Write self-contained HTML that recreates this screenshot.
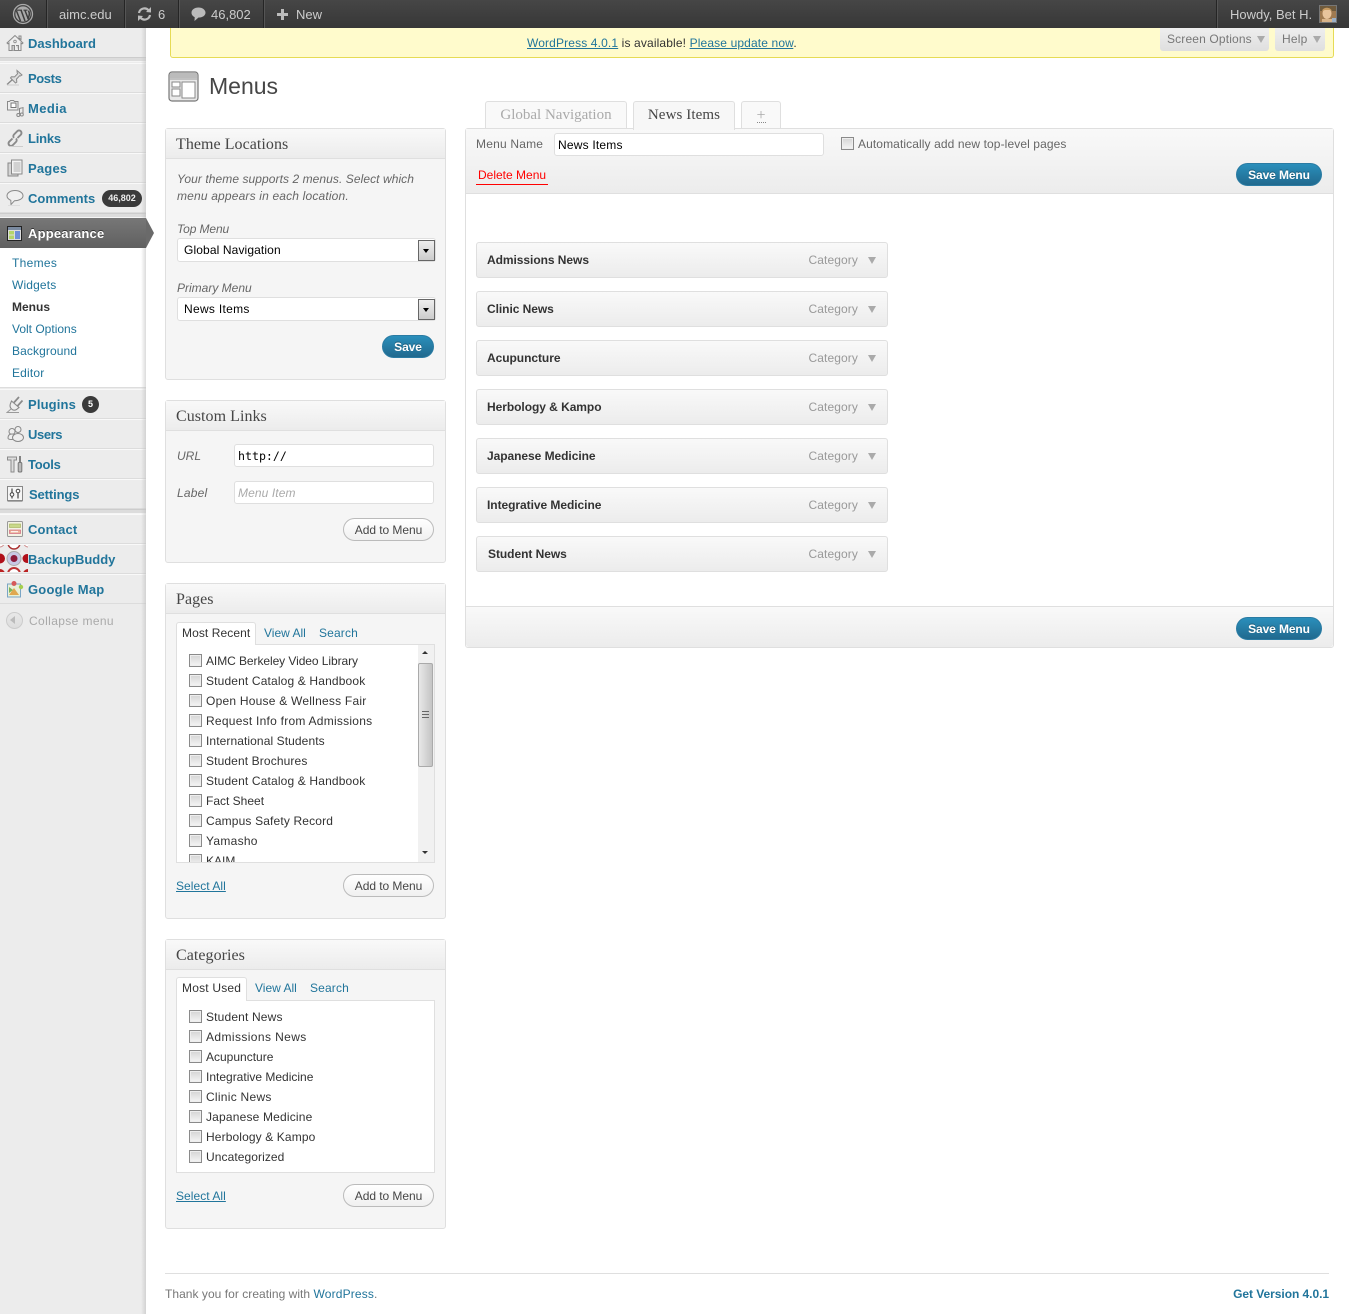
<!DOCTYPE html>
<html><head><meta charset="utf-8"><title>Menus</title>
<style>
*{box-sizing:border-box}
html,body{margin:0;padding:0}
body{width:1349px;height:1314px;position:relative;overflow:hidden;background:#fff;font:12px/16px "Liberation Sans",Arial,sans-serif;color:#333}
.a,.t{position:absolute}
.t{white-space:nowrap}
a{color:#21759b;text-decoration:none}
#bar{left:0;top:0;width:1349px;height:28px;background:linear-gradient(#464646,#373737)}
#bar .s{position:absolute;top:0;width:1px;height:28px;background:#252525;box-shadow:1px 0 0 #555}
#bar .t{color:#ccc;font-size:13px;top:7px}
#side{left:0;top:28px;width:146px;height:1286px;background:#ececec}
.m{position:absolute;left:0;width:146px;height:30px;border-top:1px solid #f9f9f9;border-bottom:1px solid #dcdcdc}
.ml{position:absolute;left:28px;font-weight:bold;font-size:13px;color:#21759b;white-space:nowrap;line-height:16px;z-index:3}
.mi{position:absolute;left:6px;width:18px;height:18px;z-index:3}
.sep{position:absolute;left:0;width:146px;height:5px;background:#dcdcdc;border-top:1px solid #ccc;border-bottom:1px solid #f5f5f5}
.sub{position:absolute;left:12px;font-size:12px;color:#21759b;white-space:nowrap}
.box{position:absolute;left:165px;width:281px;background:#f5f5f5;border:1px solid #dfdfdf;border-radius:3px}
.box h3{margin:0;height:30px;background:linear-gradient(#f9f9f9,#ececec);border-bottom:1px solid #dfdfdf;font:normal 16px/31px "Liberation Serif",Georgia,serif;color:#464646;padding-left:10px;letter-spacing:.05px;overflow:hidden}
.i{font-style:italic;color:#666}
.inp{position:absolute;background:#fff;border:1px solid #dfdfdf;border-radius:3px;white-space:nowrap}
.btn{position:absolute;height:23px;border:1px solid #bbb;border-radius:12px;background:linear-gradient(#fff,#f0f0f0);color:#464646;text-align:center;font-size:12px;line-height:22px;letter-spacing:-.05px}
.pri{position:absolute;height:23px;border-radius:12px;background:linear-gradient(#2a8fbb,#21698e);border:1px solid #2a7ba3;color:#fff;font-weight:bold;font-size:12px;line-height:22px;text-align:center;text-shadow:0 -1px 0 rgba(0,0,0,.3);letter-spacing:-.1px}
.cb{position:absolute;width:13px;height:13px;border:1px solid #8a8a8a;background:linear-gradient(#d5d5d5,#f5f5f5);box-shadow:inset 0 0 0 1px #eee}
.it{position:absolute;left:476px;width:412px;height:36px;background:linear-gradient(#f9f9f9,#ececec);border:1px solid #dfdfdf;border-radius:3px}
.it b{position:absolute;left:10px;top:9px;font-size:12px;color:#333;white-space:nowrap;letter-spacing:-.05px}
.it span{position:absolute;right:29px;top:9px;color:#999;letter-spacing:.1px}
.it i{position:absolute;right:11px;top:14px;width:0;height:0;border:4px solid transparent;border-top:7px solid #aaa;border-bottom:0}
.chk{position:absolute;left:29px;font-size:12px;color:#333;white-space:nowrap}
.tab{position:absolute;background:#f9f9f9;border:1px solid #dfdfdf;border-bottom:0;border-radius:3px 3px 0 0;text-align:center;font:15px/27px "Liberation Serif",Georgia,serif}
.sel{position:absolute;left:177px;width:259px;height:24px;background:#fff;border:1px solid #dfdfdf;border-radius:3px;padding:3px 6px;color:#000;font-size:12px}
.sel i{position:absolute;right:0;top:1px;width:17px;height:21px;border:1px solid #666;background:linear-gradient(#eee,#ccc)}
.sel i:after{content:"";position:absolute;left:4px;top:8px;border:3.5px solid transparent;border-top:4px solid #000;border-bottom:0}
</style></head><body>

<div class="a" id="side"></div>

<div class="a" id="bar">
 <svg class="a" style="left:12px;top:3px" width="22" height="22" viewBox="0 0 22 22"><circle cx="11" cy="11" r="9.5" fill="none" stroke="#aaa" stroke-width="1.3"/><circle cx="11" cy="11" r="7.6" fill="#aaa"/><path d="M4.500 8l4 10M9 7l4 11M13 7.500l3.500 9M16.500 7.600c1.400 2.600 1 6-1 8.300" fill="none" stroke="#3d3d3d" stroke-width="1.500"/><path d="M3.500 7.200h6.500M11.500 7.200h4" stroke="#3d3d3d" stroke-width="1.200"/></svg>
 <div class="s" style="left:46px"></div>
 <div class="t" style="left:59px">aimc.edu</div>
 <div class="s" style="left:124px"></div>
 <svg class="a" style="left:137px;top:7px" width="15" height="14" viewBox="0 0 15 14"><path d="M2 6a5.500 5.500 0 0 1 9.500-2.800M13 8a5.500 5.500 0 0 1-9.500 2.800" fill="none" stroke="#bbb" stroke-width="2.200"/><path d="M9 5l5 .5V0zM6 9L1 8.500V14z" fill="#bbb"/></svg>
 <div class="t" style="left:158px">6</div>
 <div class="s" style="left:178px"></div>
 <svg class="a" style="left:191px;top:7px" width="15" height="15" viewBox="0 0 15 15"><path d="M7.500 0.500C3.500.5.500 2.800.5 5.700c0 1.900 1.300 3.500 3.200 4.400L3.500 14l4-3.500c4 0 7-2 7-4.800S11.500.5 7.500.5z" fill="#bbb"/></svg>
 <div class="t" style="left:211px">46,802</div>
 <div class="s" style="left:263px"></div>
 <svg class="a" style="left:276px;top:8px" width="13" height="13" viewBox="0 0 13 13"><path d="M6.500 1v11M1 6.500h11" stroke="#bbb" stroke-width="3"/></svg>
 <div class="t" style="left:296px">New</div>
 <div class="s" style="left:1216px"></div>
 <div class="t" style="left:1230px">Howdy, Bet H.</div>
 <svg class="a" style="left:1319px;top:5px" width="18" height="18" viewBox="0 0 18 18"><rect width="18" height="18" fill="#a07a50"/><rect x="0" y="0" width="18" height="6" fill="#6f5a3c"/><ellipse cx="8" cy="8.500" rx="4.500" ry="5.500" fill="#e8c49c"/><path d="M3 6c1-4 8-4.500 10 0l-2-1H6z" fill="#c79a60"/><rect x="3" y="14" width="10" height="4" fill="#d9b48a"/><rect x="13" y="13" width="4" height="4" fill="#9ab0c8"/><rect x=".5" y=".5" width="17" height="17" fill="none" stroke="#777"/></svg>
</div>

<!-- update nag -->
<div class="a" style="left:170px;top:28px;width:1164px;height:30px;background:#fffbcc;border:1px solid #e6db55;border-top:0;border-radius:0 0 3px 3px"></div>
<div class="t" style="left:527px;top:35px;color:#333;letter-spacing:.135px"><a href="#" style="text-decoration:underline">WordPress 4.0.1</a> is available! <a href="#" style="text-decoration:underline">Please update now</a>.</div>
<div class="a" style="left:1160px;top:28px;width:109px;height:23px;background:linear-gradient(#eee,#dfdfdf);border-radius:0 0 3px 3px"></div>
<div class="t" style="left:1167px;top:31px;color:#777;letter-spacing:.15px">Screen Options</div>
<div class="a" style="left:1257px;top:36px;border:4px solid transparent;border-top:7px solid #aaa;border-bottom:0"></div>
<div class="a" style="left:1275px;top:28px;width:50px;height:23px;background:linear-gradient(#eee,#dfdfdf);border-radius:0 0 3px 3px"></div>
<div class="t" style="left:1282px;top:31px;color:#777;letter-spacing:.2px">Help</div>
<div class="a" style="left:1313px;top:36px;border:4px solid transparent;border-top:7px solid #aaa;border-bottom:0"></div>

<!-- sidebar menu -->
<div class="m" style="top:28px;height:30px;border-top:0"></div>
<div class="sep" style="top:57px"></div>
<div class="m" style="top:63px"></div>
<div class="m" style="top:93px"></div>
<div class="m" style="top:123px"></div>
<div class="m" style="top:153px"></div>
<div class="m" style="top:183px"></div>
<div class="sep" style="top:213px"></div>
<div class="a" style="left:0;top:248px;width:146px;height:140px;background:#fff;border-bottom:1px solid #ddd"></div>
<div class="m" style="top:389px"></div>
<div class="m" style="top:419px"></div>
<div class="m" style="top:449px"></div>
<div class="m" style="top:479px"></div>
<div class="sep" style="top:509px"></div>
<div class="m" style="top:514px"></div>
<div class="m" style="top:544px"></div>
<div class="m" style="top:574px;"></div>
<div class="a" style="left:141px;top:28px;width:5px;height:1286px;background:linear-gradient(90deg,rgba(200,200,200,0),rgba(190,190,190,.55))"></div>
<div class="a" style="left:0;top:218px;width:146px;height:30px;background:linear-gradient(#777,#606060);z-index:2"></div>
<div class="a" style="left:146px;top:218px;border:15px solid transparent;border-left:8px solid #6a6a6a;border-right:0;z-index:2"></div>

<!-- icons: house, pin, media, links, pages, bubble -->
<svg class="mi" style="top:34px" viewBox="0 0 18 18"><path d="M9 1.500L1 9l1 .8L3 9v7.500h12V9l1 .8 1-.8zM13 2h2v3.500L13 4z" fill="#eee" stroke="#8a8a8a"/><path d="M6 16.500v-5h2.500v5M10 11.500h2.500v5M4.500 11.500" fill="#ccc" stroke="#8a8a8a"/><circle cx="9" cy="7.500" r="1.300" fill="none" stroke="#8a8a8a" stroke-width=".8"/></svg>
<svg class="mi" style="top:69px" viewBox="0 0 18 18"><path d="M11 1.500l5 4.500-1.500 1-.8-.3-3.200 3.400.3 3-1.300.9-5-5 .9-1.200 3.200.1 3.100-3.300-.5-.9z" fill="#ddd" stroke="#8a8a8a"/><path d="M6.500 10.500L1 15.500" stroke="#888" stroke-width="1.300"/><path d="M1 16h12" stroke="#ccc"/></svg>
<svg class="mi" style="top:99px" viewBox="0 0 18 18"><path d="M1.500 2.500h2l1-1h3l1 1h3.500v8.500h-10.500z" fill="#f0f0f0" stroke="#8a8a8a"/><rect x="5" y="4" width="5" height="4.500" fill="#fff" stroke="#777"/><path d="M13.500 9v7M17 8v7M13.500 9.500L17 8.500" fill="none" stroke="#888"/><circle cx="12.300" cy="16" r="1.500" fill="#eee" stroke="#888"/><circle cx="15.800" cy="15.500" r="1.500" fill="#eee" stroke="#888"/></svg>
<svg class="mi" style="top:129px" viewBox="0 0 18 18"><path d="M6.500 9.500l-3.500 3.400a2.500 2.500 0 0 0 3.500 3.500l3.500-3.500a2.500 2.500 0 0 0 0-3.400" fill="none" stroke="#8a8a8a" stroke-width="1.900"/><path d="M11.500 9l3.500-3.500a2.500 2.500 0 0 0-3.500-3.500L8 5.500a2.500 2.500 0 0 0 0 3.400" fill="none" stroke="#8a8a8a" stroke-width="1.900"/><path d="M3 17.500h14" stroke="#ccc"/></svg>
<svg class="mi" style="top:159px" viewBox="0 0 18 18"><rect x="2" y="4" width="10" height="13" fill="#d5d5d5" stroke="#888"/><rect x="5.500" y="1" width="10.500" height="14" fill="#f3f3f3" stroke="#888"/><path d="M7.500 4h7M7.500 6h7M7.500 8h7M7.500 10h7M7.500 12h7" stroke="#999" stroke-width=".8"/></svg>
<svg class="mi" style="top:189px" viewBox="0 0 18 18"><path d="M9 1.500C4.500 1.500 1 3.800 1 6.800c0 2 1.500 3.600 3.800 4.500L5 15.500l3.500-3.800c4.700 0 8.500-2 8.500-4.900S13.500 1.500 9 1.500z" fill="#f0f0f0" stroke="#8a8a8a"/><path d="M2 16.500h12" stroke="#ddd"/></svg>
<svg class="a" style="left:7px;top:226px;z-index:3" width="15" height="15" viewBox="0 0 15 15"><rect x=".5" y=".5" width="14" height="14" fill="#ddd" stroke="#222"/><rect x="1" y="1" width="13" height="3" fill="#7a8aa0"/><rect x="2" y="5" width="5" height="3.500" fill="#b5d56a"/><rect x="2" y="9.500" width="5" height="3.500" fill="#b5d56a"/><rect x="8" y="5" width="5" height="8" fill="#6f8fd8"/></svg>
<!-- plug, users, tools, settings -->
<svg class="mi" style="top:395px" viewBox="0 0 18 18"><path d="M5.500 6l7.500 6.500-2.500 2c-1.800 1-3.700.8-5.100-.6S3.800 10.800 4.300 9z" fill="#eee" stroke="#8a8a8a" stroke-width="1.100"/><path d="M8 7.500L13 2M11.500 11L16.500 5.500" stroke="#8a8a8a" stroke-width="1.700"/><path d="M5 14L1 17.500h12" fill="none" stroke="#9a9a9a"/></svg>
<svg class="mi" style="top:425px" viewBox="0 0 18 18"><circle cx="6" cy="6.500" r="3" fill="#eee" stroke="#888"/><circle cx="12" cy="4.500" r="3" fill="#eee" stroke="#888"/><path d="M2 13c0-3 2-4 4-4s3.500 1 3.500 3-1.500 2.500-4 2.500-3.500-.500-3.500-1.500z" fill="#eee" stroke="#888"/><ellipse cx="12" cy="12.500" rx="5.500" ry="4" fill="#eee" stroke="#888"/></svg>
<svg class="mi" style="top:455px" viewBox="0 0 18 18"><path d="M1.500 2h9v3H8v12H5V5H1.500z" fill="#ddd" stroke="#8a8a8a"/><path d="M14 1v6" stroke="#777" stroke-width="1.800"/><rect x="12.200" y="7.500" width="3.600" height="9.500" rx="1" fill="#bbb" stroke="#777"/></svg>
<svg class="mi" style="top:485px;left:7px" viewBox="0 0 18 18"><rect x=".5" y="1.500" width="15" height="14" fill="#f5f5f5" stroke="#888"/><path d="M.5 16.500h15" stroke="#aaa"/><circle cx="5" cy="9.500" r="1.800" fill="#fff" stroke="#444"/><circle cx="11" cy="6" r="1.800" fill="#fff" stroke="#444"/><path d="M5 3.500v4M5 11.500v2M11 8v5.500" stroke="#444" stroke-width="1.200"/></svg>
<svg class="mi" style="top:520px" viewBox="0 0 18 18"><rect x="1.500" y="1.500" width="15" height="15" rx="1" fill="#f3f3e4" stroke="#999"/><rect x="3.500" y="4" width="11" height="3.500" fill="#c9d98a" stroke="#a2ad55" stroke-width=".6"/><rect x="3.500" y="10" width="11" height="3.500" fill="#ecb49a" stroke="#c57" stroke-width=".6"/><path d="M5 11.700h7" stroke="#fff"/></svg>
<svg class="a" style="left:0;top:545px;z-index:3" width="28" height="27" viewBox="0 0 28 27"><circle cx="14" cy="-2" r="6" fill="#fff" stroke="#a33" stroke-width="1.500"/><circle cx="14" cy="29" r="6" fill="#fff" stroke="#b33" stroke-width="2"/><circle cx="0" cy="-2" r="4" fill="#fff" stroke="#c88"/><circle cx="28" cy="-2" r="4" fill="#fff" stroke="#c88"/><circle cx="0" cy="29" r="5" fill="#b22"/><circle cx="28" cy="29" r="5" fill="#b22"/><circle cx="0" cy="13.500" r="5" fill="#b0101a"/><circle cx="27" cy="13.500" r="4.500" fill="#b0101a"/><circle cx="14" cy="13.500" r="7" fill="#c8c8e4" stroke="#aaa"/><circle cx="14" cy="13.500" r="3.500" fill="#8b1a3a"/></svg>
<svg class="mi" style="top:580px" viewBox="0 0 18 18"><rect x="1.500" y="4" width="13" height="13" fill="#e8f0d8" stroke="#7aa5c5"/><path d="M3 15l5-7 5 7z" fill="#e0a850"/><path d="M3 7l4 3-4 3z" fill="#7ab55c"/><circle cx="8" cy="3.500" r="2.500" fill="#d65a5a"/><circle cx="15" cy="7" r="2.200" fill="#a5cf4e"/></svg>

<div class="ml" style="top:36px">Dashboard</div>
<div class="ml" style="top:71px;letter-spacing:-.4px">Posts</div>
<div class="ml" style="top:101px;letter-spacing:.4px">Media</div>
<div class="ml" style="top:131px;letter-spacing:-.2px">Links</div>
<div class="ml" style="top:161px;letter-spacing:.2px">Pages</div>
<div class="ml" style="top:191px">Comments</div>
<div class="a" style="left:102px;top:190px;width:40px;height:17px;border-radius:9px;background:#3a3a3a;color:#eee;font-weight:bold;font-size:9px;line-height:17px;text-align:center">46,802</div>
<div class="ml" style="top:226px;color:#fff;text-shadow:0 -1px 0 #333;letter-spacing:.2px">Appearance</div>
<div class="sub" style="top:255px;letter-spacing:.3px">Themes</div>
<div class="sub" style="top:277px;letter-spacing:.14px">Widgets</div>
<div class="sub" style="top:299px;color:#333;font-weight:bold">Menus</div>
<div class="sub" style="top:321px">Volt Options</div>
<div class="sub" style="top:343px;letter-spacing:.1px">Background</div>
<div class="sub" style="top:365px;letter-spacing:.17px">Editor</div>
<div class="ml" style="top:397px;letter-spacing:.15px">Plugins</div>
<div class="a" style="left:82px;top:396px;width:17px;height:17px;border-radius:50%;background:#3a3a3a;color:#fff;font-weight:bold;font-size:9px;line-height:17px;text-align:center">5</div>
<div class="ml" style="top:427px;letter-spacing:-.4px">Users</div>
<div class="ml" style="top:457px;letter-spacing:-.2px">Tools</div>
<div class="ml" style="top:487px;left:29px;letter-spacing:-.12px">Settings</div>
<div class="ml" style="top:522px;letter-spacing:.14px">Contact</div>
<div class="ml" style="top:552px">BackupBuddy</div>
<div class="ml" style="top:582px;letter-spacing:.2px">Google Map</div>
<div class="a" style="left:6px;top:612px;width:17px;height:17px;border-radius:50%;background:linear-gradient(#e8e8e8,#ddd);border:1px solid #ccc"></div>
<div class="a" style="left:10px;top:616px;border:4px solid transparent;border-right:5px solid #bbb;border-left:0"></div>
<div class="t" style="left:29px;top:613px;color:#aaa;letter-spacing:.38px">Collapse menu</div>

<!-- heading -->
<svg class="a" style="left:168px;top:71px" width="31" height="31" viewBox="0 0 31 31"><rect x="1" y="1" width="29" height="29" rx="3" fill="#e9e9e9" stroke="#777" stroke-width="1.200"/><rect x="2" y="2" width="27" height="5" fill="#bbb"/><path d="M2 8h27" stroke="#999"/><rect x="4" y="11" width="8" height="5" fill="#fff" stroke="#888"/><rect x="4" y="18" width="8" height="7" fill="#fff" stroke="#888"/><rect x="14" y="11" width="13" height="16" fill="#fff" stroke="#888"/></svg>
<div class="t" style="left:209px;top:72px;font-size:23px;line-height:28px;color:#464646">Menus</div>

<!-- Theme locations -->
<div class="box" style="top:128px;height:252px"><h3>Theme Locations</h3></div>
<div class="t i" style="left:177px;top:171px;line-height:17px"><span style="letter-spacing:.07px">Your theme supports 2 menus. Select which</span><br><span style="letter-spacing:.17px">menu appears in each location.</span></div>
<div class="t i" style="left:177px;top:221px;letter-spacing:-.1px">Top Menu</div>
<div class="sel" style="top:238px"><span style="letter-spacing:.12px">Global Navigation</span><i></i></div>
<div class="t i" style="left:177px;top:280px">Primary Menu</div>
<div class="sel" style="top:297px"><span style="letter-spacing:.3px">News Items</span><i></i></div>
<div class="pri" style="left:382px;top:335px;width:52px">Save</div>

<!-- Custom links -->
<div class="box" style="top:400px;height:163px"><h3>Custom Links</h3></div>
<div class="t i" style="left:177px;top:448px">URL</div>
<div class="inp" style="left:234px;top:444px;width:200px;height:23px;padding:3px 3px 0;font:11.6px/16px 'DejaVu Sans Mono','Liberation Mono',monospace;color:#000">http://</div>
<div class="t i" style="left:177px;top:485px;letter-spacing:.2px">Label</div>
<div class="inp" style="left:234px;top:481px;width:200px;height:23px;padding:3px;font-style:italic;color:#aaa;letter-spacing:.1px">Menu Item</div>
<div class="btn" style="left:343px;top:518px;width:91px">Add to Menu</div>

<!-- Pages -->
<div class="box" style="top:583px;height:336px"><h3>Pages</h3></div>
<div class="a" style="left:176px;top:644px;width:259px;height:219px;background:#fff;border:1px solid #dfdfdf;overflow:hidden">
 <div class="cb" style="left:12px;top:9px"></div><div class="chk" style="top:8px;letter-spacing:-.07px">AIMC Berkeley Video Library</div>
 <div class="cb" style="left:12px;top:29px"></div><div class="chk" style="top:28px;letter-spacing:.15px">Student Catalog &amp; Handbook</div>
 <div class="cb" style="left:12px;top:49px"></div><div class="chk" style="top:48px;letter-spacing:.23px">Open House &amp; Wellness Fair</div>
 <div class="cb" style="left:12px;top:69px"></div><div class="chk" style="top:68px;letter-spacing:.25px">Request Info from Admissions</div>
 <div class="cb" style="left:12px;top:89px"></div><div class="chk" style="top:88px;letter-spacing:.09px">International Students</div>
 <div class="cb" style="left:12px;top:109px"></div><div class="chk" style="top:108px;letter-spacing:.12px">Student Brochures</div>
 <div class="cb" style="left:12px;top:129px"></div><div class="chk" style="top:128px;letter-spacing:.15px">Student Catalog &amp; Handbook</div>
 <div class="cb" style="left:12px;top:149px"></div><div class="chk" style="top:148px">Fact Sheet</div>
 <div class="cb" style="left:12px;top:169px"></div><div class="chk" style="top:168px;letter-spacing:.15px">Campus Safety Record</div>
 <div class="cb" style="left:12px;top:189px"></div><div class="chk" style="top:188px;letter-spacing:.28px">Yamasho</div>
 <div class="cb" style="left:12px;top:209px"></div><div class="chk" style="top:208px">KAIM</div>
 <div class="a" style="left:241px;top:0;width:16px;height:217px;background:#f1f1f1"></div>
 <div class="a" style="left:245px;top:6px;border:3.5px solid transparent;border-bottom:3.5px solid #333;border-top:0"></div>
 <div class="a" style="left:245px;top:206px;border:3.5px solid transparent;border-top:3.5px solid #333;border-bottom:0"></div>
 <div class="a" style="left:241px;top:18px;width:15px;height:104px;background:linear-gradient(90deg,#e8e8e8,#c4c4c4);border:1px solid #aaa;border-radius:2px"></div>
 <div class="a" style="left:245px;top:66px;width:7px;height:7px;border-top:1px solid #666;border-bottom:1px solid #666"><div style="height:1px;background:#666;margin-top:2px"></div></div>
</div>
<div class="a" style="left:176px;top:622px;width:80px;height:23px;background:#fff;border:1px solid #dfdfdf;border-bottom:0;border-radius:3px 3px 0 0"></div>
<div class="t" style="left:182px;top:625px;color:#333;letter-spacing:.08px">Most Recent</div>
<a class="t" style="left:264px;top:625px">View All</a>
<a class="t" style="left:319px;top:625px;letter-spacing:.15px">Search</a>
<a class="t" style="left:176px;top:878px;text-decoration:underline;letter-spacing:.05px">Select All</a>
<div class="btn" style="left:343px;top:874px;width:91px">Add to Menu</div>

<!-- Categories -->
<div class="box" style="top:939px;height:290px"><h3>Categories</h3></div>
<div class="a" style="left:176px;top:1000px;width:259px;height:173px;background:#fff;border:1px solid #dfdfdf">
 <div class="cb" style="left:12px;top:9px"></div><div class="chk" style="top:8px;letter-spacing:.16px">Student News</div>
 <div class="cb" style="left:12px;top:29px"></div><div class="chk" style="top:28px;letter-spacing:.4px">Admissions News</div>
 <div class="cb" style="left:12px;top:49px"></div><div class="chk" style="top:48px">Acupuncture</div>
 <div class="cb" style="left:12px;top:69px"></div><div class="chk" style="top:68px">Integrative Medicine</div>
 <div class="cb" style="left:12px;top:89px"></div><div class="chk" style="top:88px;letter-spacing:.27px">Clinic News</div>
 <div class="cb" style="left:12px;top:109px"></div><div class="chk" style="top:108px;letter-spacing:.18px">Japanese Medicine</div>
 <div class="cb" style="left:12px;top:129px"></div><div class="chk" style="top:128px;letter-spacing:.12px">Herbology &amp; Kampo</div>
 <div class="cb" style="left:12px;top:149px"></div><div class="chk" style="top:148px;letter-spacing:.08px">Uncategorized</div>
</div>
<div class="a" style="left:176px;top:977px;width:71px;height:24px;background:#fff;border:1px solid #dfdfdf;border-bottom:0;border-radius:3px 3px 0 0"></div>
<div class="t" style="left:182px;top:980px;color:#333;letter-spacing:.2px">Most Used</div>
<a class="t" style="left:255px;top:980px">View All</a>
<a class="t" style="left:310px;top:980px;letter-spacing:.15px">Search</a>
<a class="t" style="left:176px;top:1188px;text-decoration:underline;letter-spacing:.05px">Select All</a>
<div class="btn" style="left:343px;top:1184px;width:91px">Add to Menu</div>

<!-- Menu tabs -->
<div class="tab" style="left:485px;top:101px;width:142px;height:28px;color:#aaa">Global Navigation</div>
<div class="tab" style="left:633px;top:101px;width:102px;height:29px;color:#464646;background:#f7f7f7;z-index:2;letter-spacing:.1px">News Items</div>
<div class="tab" style="left:741px;top:101px;width:40px;height:28px;color:#aaa;font-size:16px">+</div>
<div class="a" style="left:757px;top:122px;width:9px;border-top:1px dotted #888"></div>

<!-- Menu panel -->
<div class="a" style="left:465px;top:128px;width:869px;height:520px;background:#fff;border:1px solid #dfdfdf;border-radius:3px"></div>
<div class="a" style="left:466px;top:129px;width:867px;height:65px;background:linear-gradient(#f9f9f9,#ececec);border-bottom:1px solid #dfdfdf"></div>
<div class="t" style="left:476px;top:136px;color:#666;letter-spacing:.2px">Menu Name</div>
<div class="inp" style="left:554px;top:133px;width:270px;height:23px;padding:3px;color:#000;letter-spacing:.2px">News Items</div>
<div class="cb" style="left:841px;top:137px"></div>
<div class="t" style="left:858px;top:136px;color:#666;letter-spacing:.1px">Automatically add new top-level pages</div>
<div class="t" style="left:476px;top:167px;color:#f00;padding:0 2px 1px;border-bottom:1px solid #f00">Delete Menu</div>
<div class="pri" style="left:1236px;top:163px;width:86px">Save Menu</div>

<div class="it" style="top:242px"><b>Admissions News</b><span>Category</span><i></i></div>
<div class="it" style="top:291px"><b>Clinic News</b><span>Category</span><i></i></div>
<div class="it" style="top:340px"><b>Acupuncture</b><span>Category</span><i></i></div>
<div class="it" style="top:389px"><b>Herbology &amp; Kampo</b><span>Category</span><i></i></div>
<div class="it" style="top:438px"><b>Japanese Medicine</b><span>Category</span><i></i></div>
<div class="it" style="top:487px"><b>Integrative Medicine</b><span>Category</span><i></i></div>
<div class="it" style="top:536px"><b style="left:11px">Student News</b><span>Category</span><i></i></div>

<div class="a" style="left:466px;top:606px;width:867px;height:41px;background:linear-gradient(#f9f9f9,#ececec);border-top:1px solid #dfdfdf;border-radius:0 0 3px 3px"></div>
<div class="pri" style="left:1236px;top:617px;width:86px">Save Menu</div>

<!-- footer -->
<div class="a" style="left:165px;top:1273px;width:1164px;border-top:1px solid #dfdfdf"></div>
<div class="t" style="left:165px;top:1286px;color:#777;letter-spacing:.04px">Thank you for creating with <a href="#" style="letter-spacing:.15px">WordPress</a>.</div>
<div class="t" style="right:20px;top:1286px;font-weight:bold;color:#21759b;letter-spacing:-.05px">Get Version 4.0.1</div>
</body></html>
